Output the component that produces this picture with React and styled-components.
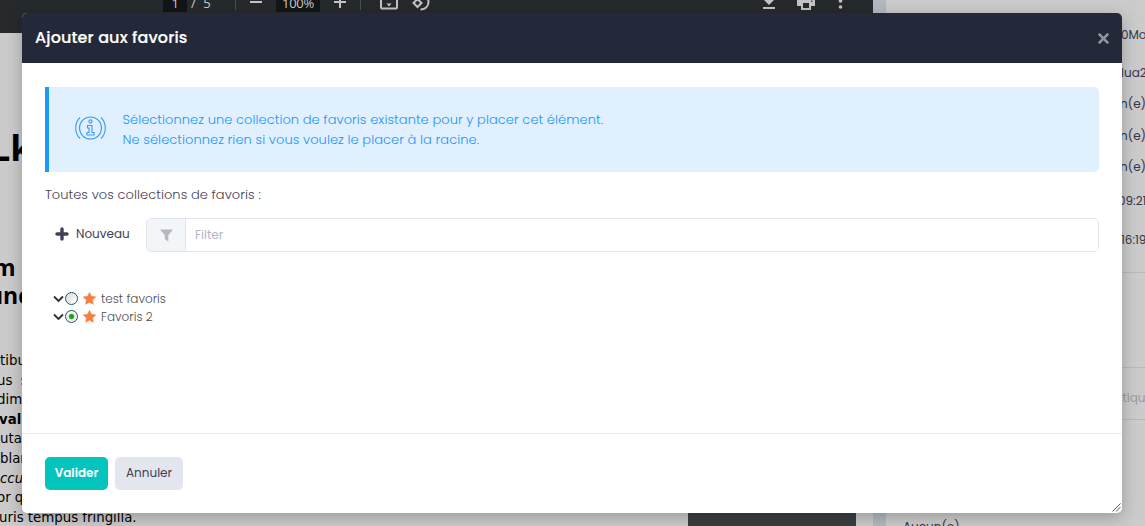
import React from "react";
import styled, { createGlobalStyle } from "styled-components";

const GlobalStyle = createGlobalStyle`
  *, *::before, *::after { box-sizing: border-box; }
  html, body { margin: 0; height: 526px; overflow: hidden; }
  body {
    font-family: Poppins, Inter, "Open Sans", sans-serif;
    font-size: 13px;
    font-weight: 300;
    color: #3f4254;
    background: #cbcbcb;
  }
`;

const Page = styled.div`
  position: relative;
  display: flex;
  width: 1145px;
  height: 526px;
  overflow: hidden;
`;

const Viewer = styled.section`
  width: 873px;
  display: flex;
  flex-direction: column;
`;

const ViewerBar = styled.div`
  height: 33px;
  flex: none;
  background: #272a2c;
  color: #cbcbcb;
  padding-left: 163px;
  display: flex;
  align-items: flex-start;
  font: 400 13px/14px "Open Sans", sans-serif;
`;

const DarkField = styled.span`
  width: ${(p) => p.$w}px;
  height: 12px;
  line-height: 6px;
  background: #141516;
  text-align: center;
  letter-spacing: -0.3px;
`;

const PageTotal = styled.span`
  width: 48px;
  padding-left: 4px;
  line-height: 6px;
  word-spacing: 4px;
`;

const Divider = styled.i`
  width: 1px;
  height: 10px;
  margin-right: ${(p) => p.$gap}px;
  background: #4b4e50;
`;

const BarIcon = styled.svg`
  flex: none;
  width: ${(p) => p.$w}px;
  height: 13px;
  margin-right: ${(p) => p.$gap || 0}px;
  margin-left: ${(p) => p.$left || 0}px;
  fill: none;
  stroke: #c4c4c4;
  stroke-width: 2;
`;

const ViewerBody = styled.div`
  flex: 1;
  min-height: 0;
  display: flex;
  background: #cbcbcb;
`;

const Sheet = styled.article`
  width: 688px;
  overflow: hidden;
  color: #000;
  white-space: pre;
  font: 400 13.33px/19.6px "DejaVu Sans", sans-serif;
`;

const SheetTitle = styled.h1`
  margin: 92px 0 0 -10px;
  font: 700 36px/46px "Open Sans", sans-serif;
`;

const SheetHeading = styled.h2`
  margin: 82px 0 42px;
  font: 700 23px/28px "Open Sans", sans-serif;
`;

const SheetLine = styled.div`
  text-indent: ${(p) => p.$shift || 0}px;
`;

const Gutter = styled.div`
  width: 168px;
  background: #3b3f42;
`;

const Splitter = styled.div`
  width: 13px;
  background: #b3b8c2;
`;

const SidePanel = styled.aside`
  flex: 1;
  overflow: hidden;
  color: #34374a;
  font-weight: 400;
  font-size: 12px;
`;

const SideRow = styled.div`
  height: ${(p) => p.$h}px;
  padding-left: ${(p) => p.$x ?? 235}px;
  padding-top: ${(p) => p.$top || 0}px;
  display: flex;
  align-items: center;
  white-space: nowrap;
  color: ${(p) => (p.$muted ? "#9a9a9e" : "inherit")};
  border-bottom: ${(p) => (p.$line ? "1px solid #b7b8c0" : "0")};
`;

const Modal = styled.div`
  position: absolute;
  left: 22px;
  top: 13px;
  width: 1100px;
  height: 500px;
  display: flex;
  flex-direction: column;
  overflow: hidden;
  background: #fff;
  border-radius: 5px;
  box-shadow: 0 4px 16px rgba(0, 0, 0, 0.25);
`;

const ModalHeader = styled.header`
  height: 50px;
  flex: none;
  padding: 0 13px;
  display: flex;
  align-items: center;
  justify-content: space-between;
  background: #242939;
`;

const ModalTitle = styled.h3`
  margin: 0 0 2px;
  font-size: 16px;
  font-weight: 500;
  color: #fff;
  letter-spacing: 0.13px;
  -webkit-text-stroke: 0.2px #fff;
`;

const CloseIcon = styled.svg`
  width: 11px;
  height: 11px;
  stroke: #9294a0;
  stroke-width: 2.6;
`;

const ModalBody = styled.div`
  flex: 1;
  padding: 24px 23px 0;
`;

const Notice = styled.div`
  height: 85px;
  display: flex;
  align-items: center;
  padding-left: 26px;
  gap: 16.5px;
  border-left: 4px solid #1b9af7;
  border-radius: 0 5px 5px 0;
  background: #e1f0ff;
  color: #2196f3;
  line-height: 20px;
  letter-spacing: 0.062px;
`;

const NoticeIcon = styled.svg`
  width: 31px;
  height: 24px;
  margin-bottom: 3px;
  fill: none;
  stroke: #389cf6;
  stroke-width: 1.1;
`;

const Line = styled.div`
  white-space: nowrap;
`;

const Label = styled.div`
  margin-top: 13px;
  line-height: 20px;
  letter-spacing: 0.06px;
`;

const FilterBar = styled.div`
  margin-top: 13px;
  height: 34px;
  display: flex;
`;

const NewButton = styled.button`
  width: 101px;
  padding: 0 0 2px 10px;
  border: 0;
  background: none;
  display: flex;
  align-items: center;
  gap: 7px;
  font: inherit;
  font-size: 12px;
  font-weight: 400;
  color: inherit;
`;

const FilterGroup = styled.div`
  flex: 1;
  display: flex;
  border: 1px solid #e2e4ec;
  border-radius: 5px;
  overflow: hidden;
`;

const FilterAddon = styled.span`
  width: 39px;
  display: flex;
  align-items: center;
  justify-content: center;
  background: #f3f6f9;
  border-right: 1px solid #e2e4ec;
`;

const FilterInput = styled.input`
  flex: 1;
  border: 0;
  outline: 0;
  padding: 0 9px;
  font: inherit;
  font-size: 12px;
  font-weight: 400;
  letter-spacing: 0;
  &::placeholder { color: #b5b5c3; opacity: 1; }
`;

const Tree = styled.ul`
  list-style: none;
  margin: 38px 0 0;
  padding: 0 0 0 8px;
`;

const TreeItem = styled.li`
  height: 18px;
  display: flex;
  align-items: center;
  font-size: 12px;
  color: #505050;
`;

const Chevron = styled.svg`
  width: 11px;
  height: 8px;
  margin-right: 1px;
  fill: none;
  stroke: #303030;
  stroke-width: 1.9;
`;

const Radio = styled.span`
  width: 13px;
  height: 13px;
  margin-bottom: 2px;
  border: 1px solid #1d5281;
  border-radius: 50%;
  background: ${(p) =>
    p.$checked
      ? "radial-gradient(circle, #21a121 0 2px, #8fd08f 2.8px, #f3f3ef 3.2px)"
      : "linear-gradient(135deg, #dcdcd7, #fff)"};
`;

const Star = styled.svg`
  width: 13px;
  height: 13px;
  margin: 0 5px 2px;
  fill: #f7803f;
  stroke: #f7803f;
  stroke-width: 0.6;
  stroke-linejoin: round;
`;

const ModalFooter = styled.footer`
  height: 80px;
  flex: none;
  border-top: 1px solid #ebedf3;
  padding: 23px 23px 0;
  display: flex;
  align-items: flex-start;
  gap: 7px;
`;

const Button = styled.button`
  width: ${(p) => p.$w}px;
  height: 33px;
  border: 0;
  padding: 0 0 1px;
  border-radius: 5px;
  font: inherit;
  font-size: 12px;
  font-weight: ${(p) => (p.$primary ? 600 : 400)};
  color: ${(p) => (p.$primary ? "#fff" : "#3f4254")};
  background: ${(p) => (p.$primary ? "#04c5bd" : "#e3e6ee")};
`;

const ResizeGrip = styled.svg`
  position: absolute;
  right: 1px;
  bottom: 1px;
  width: 9px;
  height: 9px;
  stroke: #555;
  stroke-width: 1;
`;

const Favorite = ({ name, checked }) => (
  <TreeItem>
    <Chevron viewBox="0 0 11 8"><path d="M1 1.5 5.5 6 10 1.5" /></Chevron>
    <Radio $checked={checked} />
    <Star viewBox="0 0 13 13">
      <path d="M6.5.4 8.4 4.3l4.3.6-3.1 3 .7 4.400-3.800-2.100-3.800 2.100.700-4.400L.300 4.900l4.300-.600z" />
    </Star>
    {name}
  </TreeItem>
);

export default function App() {
  return (
    <>
      <GlobalStyle />
      <Page>
        <Viewer>
          <ViewerBar>
            <DarkField $w={24}>1</DarkField>
            <PageTotal>/ 5</PageTotal>
            <Divider $gap={14} />
            <BarIcon $w={12} $gap={14} viewBox="0 0 12 13"><path d="M0 2h12" /></BarIcon>
            <DarkField $w={44}>100%</DarkField>
            <BarIcon $w={12} $left={14} $gap={14} viewBox="0 0 12 13"><path d="M0 2h12M6-4V8" /></BarIcon>
            <Divider $gap={19} />
            <BarIcon $w={18} $gap={14} viewBox="0 0 18 13">
              <path d="M1-3V7.5q0 1 1 1h14q1 0 1-1V-3" />
              <path d="M6.5 3.5h5L9 6.5z" fill="#c4c4c4" stroke="none" />
            </BarIcon>
            <BarIcon $w={18} viewBox="0 0 18 13">
              <path d="M1.500 3 5.500-1 9.500 3 5.500 7z" />
              <path d="M9-4.500C15-4.500 16.500 0 16.500 2c0 4.500-3.500 7.500-8 7.500" />
            </BarIcon>
            <BarIcon $w={12} $left={333} $gap={22} viewBox="0 0 12 13">
              <path d="M0 8h12" />
              <path d="M0-1h12L6 5z" fill="#c4c4c4" stroke="none" />
            </BarIcon>
            <BarIcon $w={18} $gap={23} viewBox="0 0 18 13">
              <path d="M0 6V1q0-3 3-3h12q3 0 3 3v5h-4v4H4V6zM6 3v5h6V3z" fill="#c4c4c4" fillRule="evenodd" stroke="none" />
              <circle cx="14.8" cy="1.3" r=".8" fill="#272a2c" stroke="none" />
            </BarIcon>
            <BarIcon $w={5} viewBox="0 0 5 13">
              <g fill="#c4c4c4" stroke="none">
                <circle cx="2.5" cy="1" r="1.8" />
                <circle cx="2.5" cy="7" r="1.8" />
              </g>
            </BarIcon>
          </ViewerBar>
          <ViewerBody>
            <Sheet>
              <SheetTitle>Lk</SheetTitle>
              <SheetHeading>
                <SheetLine $shift={-7}>m</SheetLine>
                <SheetLine $shift={-12}>und</SheetLine>
              </SheetHeading>
              <SheetLine>tibulum</SheetLine>
              <SheetLine $shift={-3}>us  s</SheetLine>
              <SheetLine $shift={-3}>dimen</SheetLine>
              <SheetLine $shift={-1}><b>valim</b></SheetLine>
              <SheetLine>utat</SheetLine>
              <SheetLine>bland</SheetLine>
              <SheetLine><i>ccum</i></SheetLine>
              <SheetLine $shift={-3}>or qu</SheetLine>
              <SheetLine $shift={-1}>uris tempus fringilla.</SheetLine>
            </Sheet>
            <Gutter />
          </ViewerBody>
        </Viewer>
        <Splitter />
        <SidePanel>
          <SideRow $h={20} />
          <SideRow $h={30}>0Mo</SideRow>
          <SideRow $h={46}>lua2</SideRow>
          <SideRow $h={16} $x={234}>n(e)</SideRow>
          <SideRow $h={48} $x={234}>n(e)</SideRow>
          <SideRow $h={14} $x={234}>n(e)</SideRow>
          <SideRow $h={54} $x={232}>09:21</SideRow>
          <SideRow $h={24}>16:19</SideRow>
          <SideRow $h={21} $line />
          <SideRow $h={95} $line />
          <SideRow $h={52} $line $muted $x={229} $top={8}>étiqu</SideRow>
          <SideRow $h={98} />
          <SideRow $h={18} $x={17}>Aucun(e)</SideRow>
        </SidePanel>

        <Modal>
          <ModalHeader>
            <ModalTitle>Ajouter aux favoris</ModalTitle>
            <CloseIcon viewBox="0 0 11 11"><path d="m.8.8 9.4 9.4M10.2.8.8 10.2" /></CloseIcon>
          </ModalHeader>
          <ModalBody>
            <Notice>
              <NoticeIcon viewBox="0 0 31 24">
                <circle cx="15.5" cy="12" r="11" />
                <path d="M5 1.5C-.7 7-.7 17 5 22.5M26 1.5c5.700 5.500 5.700 15.500 0 21" />
                <circle cx="15.500" cy="5.500" r="1.600" />
                <path d="M12.500 9.500h4.500v7h2v2.500h-7v-2.500h2v-4.500h-1.500z" />
              </NoticeIcon>
              <div>
                <Line>Sélectionnez une collection de favoris existante pour y placer cet élément.</Line>
                <Line>Ne sélectionnez rien si vous voulez le placer à la racine.</Line>
              </div>
            </Notice>
            <Label>Toutes vos collections de favoris :</Label>
            <FilterBar>
              <NewButton>
                <svg width="14" height="14" viewBox="0 0 14 14" stroke="#3f4254" strokeWidth="3.400" strokeLinecap="round">
                  <path d="M7 2v10M2 7h10" />
                </svg>
                Nouveau
              </NewButton>
              <FilterGroup>
                <FilterAddon>
                  <svg width="13" height="13" viewBox="0 0 13 13" fill="#b5b5c3">
                    <path d="M.8.500h11.400q.700 0 .400.700L8.300 6v6.500L4.800 10V6L.400 1.200Q.100.500.800.500z" />
                  </svg>
                </FilterAddon>
                <FilterInput placeholder="Filter" />
              </FilterGroup>
            </FilterBar>
            <Tree>
              <Favorite name="test favoris" />
              <Favorite name="Favoris 2" checked />
            </Tree>
          </ModalBody>
          <ModalFooter>
            <Button $primary $w={63}>Valider</Button>
            <Button $w={68}>Annuler</Button>
          </ModalFooter>
          <ResizeGrip viewBox="0 0 9 9"><path d="M.5 8.500 8.500.500M4 8.500 8.500 4" /></ResizeGrip>
        </Modal>
      </Page>
    </>
  );
}
